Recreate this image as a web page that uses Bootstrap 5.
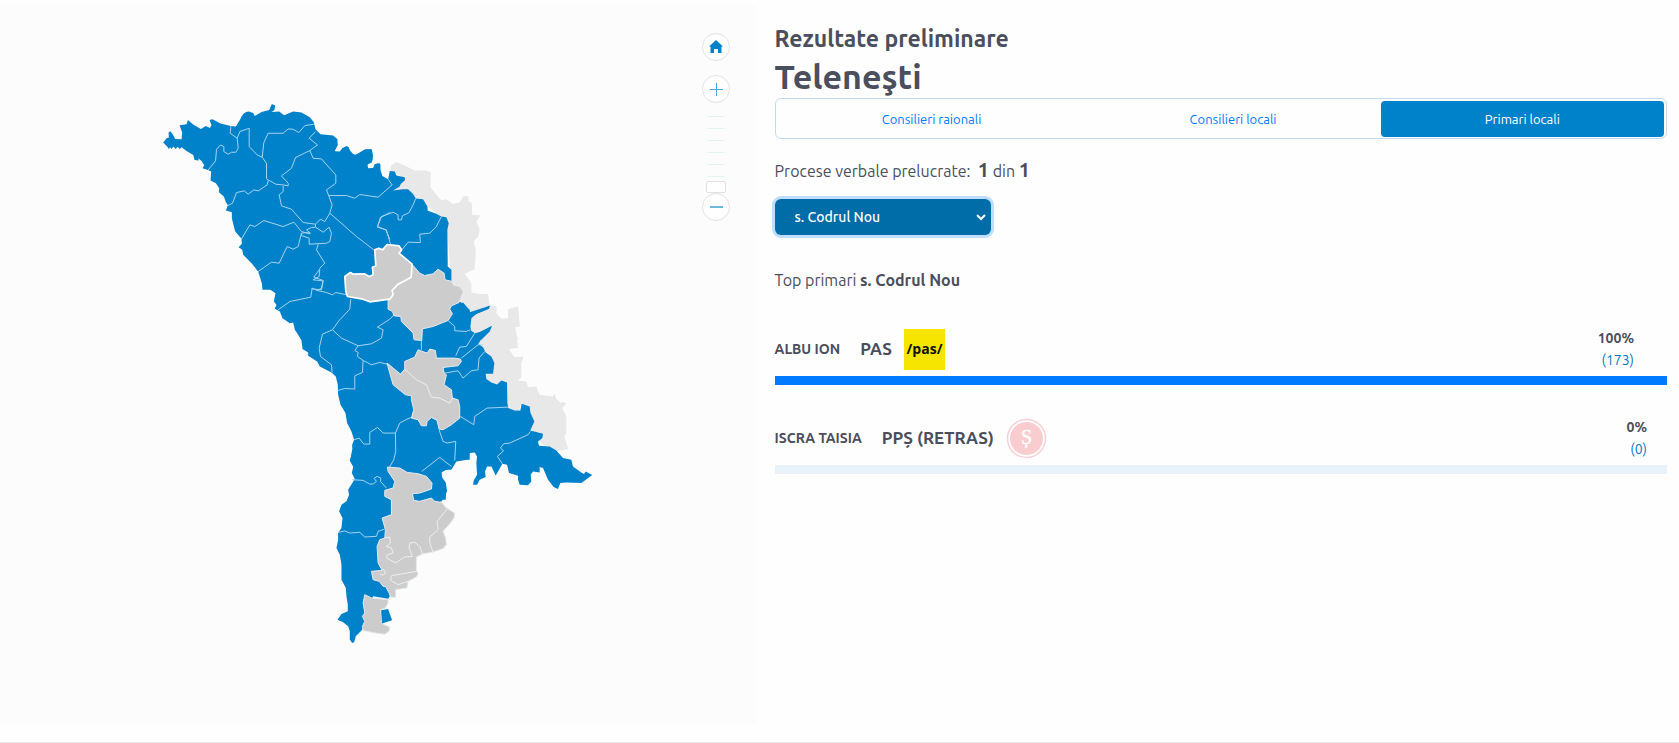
<!DOCTYPE html>
<html lang="ro">
<head>
<meta charset="utf-8">
<meta name="viewport" content="width=device-width, initial-scale=1">
<title>Rezultate preliminare – Teleneşti</title>
<link href="https://cdn.jsdelivr.net/npm/bootstrap@5.3.0/dist/css/bootstrap.min.css" rel="stylesheet">
<style>
body{font-family:Ubuntu,"Noto Sans","Open Sans",sans-serif;color:#4b4e5c;background:#fefefe;font-size:16px}
.map-panel{flex:0 0 45%;background:#fcfcfc;margin-top:5px}
.map-panel svg.country{display:block;width:100%;height:auto}
.blue-area{fill:#0082ca}
.grey-area{fill:#ccc;stroke:#e6eaee;stroke-width:3;stroke-linejoin:round}
.pale-area{fill:#e8e8e8}
.chosen-area{fill:#ccc;stroke:#fff;stroke-width:5;stroke-linejoin:round}
.limits{fill:none;stroke:#a6d3ee;stroke-width:3;stroke-linejoin:round}
.limits-grey{fill:none;stroke:#eee;stroke-width:3;stroke-linejoin:round}
.map-tools{top:28px;right:26px;width:28px}
.tool-btn{width:28px;height:28px;border:1px solid #e3e3e3;border-radius:50%;background:#fff}
.tool-home{margin-bottom:14px}
.zoom-track{width:28px;height:78px;margin-top:12px}
.zoom-track input{position:absolute;width:78px;height:28px;left:-25px;top:25px;transform:rotate(-90deg);appearance:none;-webkit-appearance:none;margin:0;background:repeating-linear-gradient(to right,transparent 0 4px,#e3f1f8 4px 5px,transparent 5px 12px) center/100% 16px no-repeat}
.zoom-track input::-webkit-slider-thumb{-webkit-appearance:none;width:12px;height:20px;border:1px solid #e1e1e1;border-radius:2px;background:#fff}
.results{padding:23px 12px 0 19px;min-width:0}
h1{font-size:23px;line-height:32px;font-weight:700}
h2{font-size:34px;line-height:43px;font-weight:700;font-feature-settings:"locl" 0}
.race-tabs{border:1px solid #c3dbf0;border-radius:6px;padding:2px 2px 1px;font-size:13px}
.race-tabs .nav-link{color:#007bff;line-height:20px;padding:8px 16px;border-radius:4px}
.race-tabs .nav-link.active{background:#0082ca;color:#fff}
.counted{line-height:30px;margin-top:16px}
.counted strong{font-size:20px}
.place-select{width:216px;height:36px;margin-top:13px;padding:0 32px 0 20px;border:0;border-radius:6px;color:#fff;font-size:14px;font-weight:500;background-color:#006ca8;background-size:12px 12px;background-position:right 4px center;box-shadow:0 0 0 3px #bfdeff;background-image:url("data:image/svg+xml,%3csvg xmlns='http://www.w3.org/2000/svg' viewBox='0 0 12 12'%3e%3cpath fill='none' stroke='white' stroke-width='2' d='M2 4l4 4 4-4'/%3e%3c/svg%3e")}
.place-select:focus{border:0;box-shadow:0 0 0 3px #bfdeff}
.top-line{line-height:24px;margin:33px 0 0}
.candidate{height:89px}
.candidate-list{margin-top:35px}
.cand-name{font-size:14px;font-weight:600;margin-right:20px}
.cand-party{font-size:17px;font-weight:600;margin-right:12px}
.party-logo{width:41px;height:41px}
.cand-votes{font-size:14px;line-height:22px;text-align:right;margin-right:33px}
.cand-votes.no-votes{margin-right:20px}
.cand-votes a{color:#0b76c4;text-decoration:none}
.vote-bar{height:9px;border-radius:0;background:#e9f2fb;margin-top:5px}
.vote-bar .progress-bar{background:#007bff}
.page-end{border-top:1px solid #e8e8e8;margin-top:18px}
</style>
</head>
<body>
<main class="d-flex align-items-start">
<section class="map-panel position-relative" aria-label="Harta raioanelor">
<svg class="country" viewBox="0 15 2268 2157" role="img" aria-label="Republica Moldova">
<!-- left bank of the Nistru -->
<g class="pale-area">
<path transform="translate(990 420)" d="M183 78L200 66 215 72 235 82 255 92 290 92 304 98 302 142 335 182 350 178 370 192 390 188 400 170 415 168 417 185 427 190 427 225 452 226 440 245 450 270 445 290 432 305 438 330 437 360 434 388 405 402 425 430 425 458 442 462 475 463 478 495 500 500 500 520 515 537 535 535 535 508 565 500 570 560 555 562 565 600H420L365 430 350 240 250 170 215 145 205 162 190 150 215 125 225 115 183 93Z"/>
<path transform="translate(1200 870)" d="M190 0L215 8 232 15 265 13 268 45 290 50 290 72 305 88 325 88 325 58 355 50 360 108 347 112 355 175 327 178 345 202 372 200 365 222 365 262 355 272 380 275 385 292 410 290 420 315 460 320 465 312 470 328 485 340 490 335 500 342 488 355 500 380 500 432 494 440 506 478 485 482 455 485 400 440 395 400 380 360 362 345 360 362 340 360 315 340 315 290 270 290 220 170 200 100 180 40Z"/>
</g>
<g class="blue-area">
<path transform="translate(450 270)" d="M40 158L50 145 57 143 56 128 61 124 68 132 76 147 95 148 97 128 89 106 110 103 114 90 130 104 153 117 168 108 180 114 185 106 179 90 188 88 212 101 243 108 258 110 270 90Q280 65 297 65L310 69 315 78 335 66 358 60 366 42 376 47 374 60 365 66 388 65 403 76 430 65 455 68 480 82 492 97 497 118 512 133 550 137 563 148 562 162 554 184 570 185 588 170 597 172 600 188 617 195 642 180 664 178 668 210 653 225 655 236 672 234 684 220 692 224 691 252 700 265 720 270V600H338L336 580 325 545 305 520 280 495 277 480 266 472 276 462 275 447 256 425 250 402 246 385 246 367 228 362 234 345 228 337 222 320 207 307 208 295 198 280 182 272 184 245 174 240 158 235 163 226 155 213 145 205 147 212 134 210 130 195 110 183 95 172 90 177 83 171 77 177 70 170 65 177 60 172 57 178 53 171Z"/>
<path transform="translate(990 420)" d="M0 0H22L24 15 14 35 28 38 38 24 52 18 60 30 72 45 88 42 106 28 126 28 130 48 126 68 112 74 113 86 130 84 135 72 150 70 152 90 158 108 175 118 180 93 195 95 200 107 225 112 226 120 213 132 210 140 190 152 218 148 235 148 250 162 258 176 280 178 293 200 294 213 320 222 335 230 350 232 357 250 353 270 354 380 365 390 365 430 370 500 400 488 415 505 420 517 480 498 478 506 440 522 425 535 422 560 425 575 440 582 487 558 480 575 455 600H0Z"/>
<path transform="translate(690 810)" d="M78 0L90 5 95 35 102 48 125 62 137 70 132 95 140 105 135 117 150 125 158 145 180 160 190 158 195 180 205 195 215 212 218 238 235 248 235 258 262 275 270 290 305 308 318 320 324 345 325 375 332 405 347 430 352 460 365 485 373 510 367 525 368 545 360 572 375 600H665L680 575 712 570H720V120L690 95 640 60V0Z"/>
<path transform="translate(1200 870)" d="M150 55L165 50 175 36 188 40 205 60 212 68 260 53 270 48 268 57 235 70 215 80 212 95 210 120 225 130 248 125 275 109 270 122 250 140 236 162 250 172 258 188 275 200 284 220 280 252 258 252 260 268 275 278 292 284 305 272 322 278 323 340 326 355 345 362 362 362 366 342 390 350 392 368 404 395 392 422 430 432 428 445 415 455 418 468 450 470 470 482 490 505 515 510 520 530 545 548 553 553 558 545 578 556 545 580 500 578 482 580 475 598 462 592 445 570 430 535 420 532 420 548 400 545 393 555 395 575 385 587 360 585 355 570 355 558 328 550 322 525 308 522 298 540 288 557 275 530 262 530 256 545 258 562 240 570 232 585 220 585 222 572 232 555 230 520 232 500 225 488 210 490 202 508 168 512 155 530 125 548 130 580 140 600 138 630H0V150L65 120Z"/>
<path transform="translate(960 1350)" d="M97 0L92 30 102 45 96 70 105 88 85 120 88 135 80 155 65 165 58 185 68 205 65 235 55 250 55 270 50 295 60 315 65 345 65 390 78 415 80 440 84 465 84 485 65 493 53 510 70 518 85 530 90 545 90 570 97 580 103 578 108 560 128 540 160 440 205 447 213 435 200 410 187 365 250 200 366 155 382 125 378 98 365 80 365 65 395 55 403 32 440 30 400 0Z"/>
</g>
<g class="limits">
<path transform="translate(450 270)" d="M243 108L241 130 262 145 265 175 258 187 245 187 235 193 222 185 222 170 212 165 200 178 197 213 175 240M262 145L270 125 298 115 298 170 322 195 337 202M492 103L465 107 447 128 430 118 415 117 400 130 355 130 342 158 337 202 350 220 350 265 355 272M355 270L378 283 400 285 415 288 415 280 395 258 425 235 437 203 480 182 503 165 478 145 497 125M480 182L490 205 515 207 558 255 558 280 530 300 537 318 547 345 540 370 525 395 512 388 497 403 460 398 425 358 395 348 388 315 400 305 400 288M355 272L352 285 325 303 312 300 295 313 283 303 260 308 248 340 234 347M537 317L590 317 615 325 630 314 685 322M540 370L620 440 672 480M275 447L300 405 315 410 342 392 400 410 432 397 455 425 480 432M720 368L692 383 683 410 708 420 720 448M455 430L470 428 482 430 470 420 485 413 497 412 520 427 538 412 545 430 540 455 530 460 478 463 478 445 455 437ZM455 430L445 470 430 478 412 470 388 520 365 517 325 545M505 463L500 480 525 520 510 535 508 560 490 570 520 573 515 600 485 597M497 403V412"/>
<path transform="translate(990 420)" d="M145 172L187 135 175 118M258 176L250 195 238 218 218 228 215 240 205 240 205 225 190 217 155 230 143 262 170 270 182 312M335 230L320 260 300 280 270 283 272 308 235 307 218 328"/>
<path transform="translate(690 810)" d="M268 0L252 22 280 32 275 55 262 62 247 55 243 82 180 95 145 120M262 62L290 68 308 75 318 68 350 75M363 88L360 118 328 152 308 180 278 193 268 235 272 260 305 285 307 308M308 180L335 205 385 228 425 222 455 205 460 180 443 172 480 148 493 135M385 228L375 242 385 248 383 260 400 272 425 285 450 278 472 283M400 272L398 308 375 318 375 358 345 356 325 362M373 510L388 505 402 523 420 523 420 488 443 473 460 490 497 490 510 460 528 450 547 442M497 490L498 545 492 570 475 600"/>
<path transform="translate(1200 870)" d="M145 92L165 110 165 123 200 125 212 120M225 130L200 170 180 172 168 198M185 205L235 165 250 165M255 185L238 205 235 240 215 243 190 265 175 243 135 250M182 380L222 405 225 380 262 355 326 352M392 425L385 435 330 460 312 462 302 475 312 483 293 500 308 522M118 420L130 455 142 460 168 455 165 512M66 545L120 503 155 530M65 150V180"/>
<path transform="translate(960 1350)" d="M97 90L130 92 150 103 160 103 170 95 163 86 172 80 183 85 182 95 200 115M55 248L75 244 90 250 120 248 135 262 170 260 175 245 195 238"/>
</g>
<g class="grey-area">
<path transform="translate(990 420)" d="M248 375L270 400 285 407 310 402 325 388 343 400 346 420 365 424 372 436 390 440 401 455 388 488 365 498 360 508 368 522 355 542 310 560 278 567 276 602 253 600 250 580 215 545 213 530 193 528 188 515 175 508 175 478 190 465 187 452 205 435 245 413Z"/>
<path transform="translate(690 810)" d="M565 240L592 250 600 238 617 242 620 265 675 265 692 268 695 275 685 288 640 293 643 310 650 315 643 345 665 360 668 385 685 390 690 410 690 445 665 465 640 480 628 478 622 452 605 443 592 455 590 468 575 468 565 450 545 445 552 420 545 390 545 378 527 375 490 345 480 310 472 280 512 313 525 298 525 275 555 262Z"/>
<path transform="translate(960 1350)" d="M203 52L240 55 262 68 295 72 320 80 337 100 335 118 300 130 278 132 282 152 300 155 335 145 345 155 365 158 380 175 405 190 403 205 388 225 370 245 378 265 380 285 370 297 340 307 308 313 290 322 290 362 295 372 290 382 265 395 262 415 228 420 228 443 213 443 208 430 197 410 190 410 178 395 160 390 155 365 187 362 175 340 172 290 180 270 195 265 197 240 187 205 215 195 215 150 195 140 195 122 220 115 225 95 205 65ZM135 435L155 445 205 450 205 460 197 475 183 480 187 522 210 532 208 545 195 554 165 550 130 543 128 530 135 515 128 500 135 490 130 460Z"/>
</g>
<g class="limits-grey">
<path transform="translate(690 810)" d="M525 298L560 330 590 345 605 382 630 385 660 400 668 385"/>
<path transform="translate(960 1350)" d="M383 177L352 215 355 240 330 262 330 280 340 307M308 313L300 290 285 278 270 280 268 295 278 320 255 322 228 340 200 325 203 315 220 310 215 295 200 290 212 280 210 262 195 265M292 365L215 378 212 392 235 405 265 395M187 360a8 8 0 1 1-6 12"/>
</g>
<path class="blue-area" transform="translate(960 1350)" d="M184 482L205 478 217 512 187 522Z"/>
<path class="chosen-area" transform="translate(990 420)" d="M135 330L147 325 158 330 172 314 208 318 216 330 208 340 247 373 244 412 205 433 187 452 190 465 180 478 120 486 95 477 53 470 48 455 45 410 62 398 70 403 105 402 118 410 130 405 128 382 138 378Z"/>
</svg>
<div class="map-tools position-absolute d-flex flex-column">
<button type="button" class="tool-btn tool-home p-0 d-flex align-items-center justify-content-center" aria-label="Acasă"><svg width="14" height="14" viewBox="0 0 14 14"><path fill="#0082ca" d="M7 0L14 6.500H12.500V13H9V9H5V13H1.500V6.500H0Z"/></svg></button>
<button type="button" class="tool-btn p-0 d-flex align-items-center justify-content-center" aria-label="Mărește"><svg width="14" height="14" viewBox="0 0 14 14"><path fill="none" stroke="#4aa5d8" d="M7.500 1V14M1 7.500H14"/></svg></button>
<div class="zoom-track position-relative"><input type="range" min="0" max="6" value="0" aria-label="Nivel de zoom"></div>
<button type="button" class="tool-btn p-0 d-flex align-items-center justify-content-center" aria-label="Micșorează"><svg width="14" height="14" viewBox="0 0 14 14"><path fill="none" stroke="#6fb6df" stroke-width="2" d="M1 7H14"/></svg></button>
</div>
</section>
<section class="results flex-grow-1">
<h1 class="m-0">Rezultate preliminare</h1>
<h2 class="m-0" lang="en">Teleneşti</h2>
<nav class="race-tabs nav nav-pills nav-fill">
<a class="nav-link" href="#raionali">Consilieri raionali</a>
<a class="nav-link" href="#locali">Consilieri locali</a>
<a class="nav-link active" href="#primari" aria-current="page">Primari locali</a>
</nav>
<div class="counted">Procese verbale prelucrate:&nbsp; <strong>1</strong> din <strong>1</strong></div>
<select class="place-select form-select" aria-label="Localitatea"><option>s. Codrul Nou</option></select>
<p class="top-line">Top primari <strong>s. Codrul Nou</strong></p>
<div class="candidate-list">
<article class="candidate">
<div class="d-flex align-items-center">
<span class="cand-name">ALBU ION</span><span class="cand-party">PAS</span>
<svg class="party-logo" viewBox="0 0 41 41" aria-label="PAS"><path fill="#f6e500" d="M0 0H41V41H0Z"/><text x="20.500" y="25" text-anchor="middle" font-family="Open Sans,sans-serif" font-size="14" font-weight="700" fill="#111">/pas/</text></svg>
<div class="cand-votes ms-auto"><strong class="d-block">100%</strong><a class="d-block" href="#voturi-albu">(173)</a></div>
</div>
<div class="progress vote-bar" role="progressbar" aria-label="ALBU ION" aria-valuenow="100" aria-valuemin="0" aria-valuemax="100"><div class="progress-bar" style="width:100%"></div></div>
</article>
<article class="candidate">
<div class="d-flex align-items-center">
<span class="cand-name">ISCRA TAISIA</span><span class="cand-party">PPȘ (RETRAS)</span>
<svg class="party-logo" viewBox="0 0 41 41" aria-label="PPȘ"><circle cx="20.500" cy="20.500" r="19" fill="#fff" stroke="#f9cfd2" stroke-width="1.500"/><circle cx="20.500" cy="20.500" r="16.500" fill="#f9cdd0"/><text x="20.500" y="26" text-anchor="middle" font-family="Liberation Serif,serif" font-size="20" fill="#fff" stroke="#fff" stroke-width=".4">Ș</text></svg>
<div class="cand-votes no-votes ms-auto"><strong class="d-block">0%</strong><a class="d-block" href="#voturi-iscra">(0)</a></div>
</div>
<div class="progress vote-bar" role="progressbar" aria-label="ISCRA TAISIA" aria-valuenow="0" aria-valuemin="0" aria-valuemax="100"><div class="progress-bar" style="width:0%"></div></div>
</article>
</div>
</section>
</main>
<footer class="page-end"></footer>
<script src="https://cdn.jsdelivr.net/npm/bootstrap@5.3.0/dist/js/bootstrap.bundle.min.js"></script>
</body>
</html>
